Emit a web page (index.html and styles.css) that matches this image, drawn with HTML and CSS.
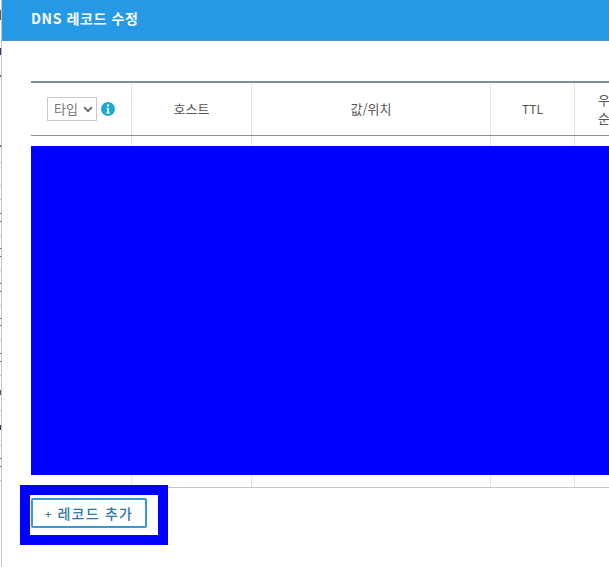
FILE: index.html
```html
<!DOCTYPE html>
<html lang="ko">
<head>
<meta charset="utf-8">
<title>DNS 레코드 수정</title>
<link rel="stylesheet" href="styles.css">
</head>
<body>
<svg class="edge-ticks" width="1" height="567" viewBox="0 0 1 567" aria-hidden="true">
  <path fill="#55606a" d="M0 10h1v10H0zM0 75h1v2H0zM0 145h1v2H0zM0 213h1v1H0zM0 221h1v1H0zM0 248h1v1H0zM0 256h1v1H0zM0 283h1v1H0zM0 291h1v1H0zM0 318h1v1H0zM0 325h1v1H0zM0 353h1v1H0zM0 361h1v1H0zM0 390h1v5H0zM0 458h1v1H0zM0 466h1v1H0z"/>
  <path fill="#2b2f6b" d="M0 48h1v7H0zM0 425h1v5H0z"/>
  <path fill="#c8c8c8" d="M0 162h1v1H0zM0 185h1v1H0zM0 199h1v1H0zM0 235h1v1H0zM0 270h1v1H0zM0 305h1v1H0zM0 340h1v1H0zM0 375h1v1H0zM0 410h1v1H0zM0 445h1v1H0zM0 480h1v1H0z"/>
</svg>
<div class="modal">
  <header class="modal-head">DNS 레코드 수정</header>
  <div class="modal-body">
    <div class="record-table">
      <div class="head-row">
        <div class="cell cell-type">
          <span class="type-select">타입<svg class="chevron" viewBox="0 0 10 7" width="10" height="7"><path d="M1 1.200 5 5.200 9 1.200" fill="none" stroke="#666" stroke-width="1.800"/></svg></span>
          <svg class="info" viewBox="0 0 14 14" width="14" height="14"><circle cx="7" cy="7" r="7" fill="#1fa9d0"/><rect x="6" y="2.500" width="2" height="2" fill="#fff"/><path d="M5.300 6h2.700v4.400h1v1.100H5.300v-1.100h1V7.100H5.300z" fill="#fff"/></svg>
        </div>
        <div class="cell cell-host">호스트</div>
        <div class="cell cell-value">값/위치</div>
        <div class="cell cell-ttl">TTL</div>
        <div class="cell cell-prio">우<br>순</div>
      </div>
      <div class="body-row">
        <div class="cell cell-type"></div>
        <div class="cell cell-host"></div>
        <div class="cell cell-value"></div>
        <div class="cell cell-ttl"></div>
        <div class="cell cell-prio"></div>
        <div class="redaction"></div>
      </div>
    </div>
    <div class="add-frame">
      <button class="add-btn" type="button"><span class="plus">+</span> 레코드 추가</button>
    </div>
  </div>
</div>
</body>
</html>
```

FILE: styles.css
```css
html, body {
  margin: 0;
  padding: 0;
  height: 567px;
  overflow: hidden;
  background: #fff;
}
body {
  display: flex;
  font-family: "Noto Sans CJK KR", "Liberation Sans", sans-serif;
  color: #555;
}
.edge-ticks {
  flex: none;
  display: block;
}
.modal {
  flex: 1;
  min-width: 0;
  height: 567px;
  border-left: 1px solid #c4c4c4;
  overflow: hidden;
}
.modal-head {
  height: 41px;
  box-sizing: border-box;
  background: #2599e6;
  color: #fff;
  font-size: 14px;
  font-weight: 700;
  letter-spacing: 0.6px;
  line-height: 37px;
  padding-left: 29px;
  border-bottom: 1px solid #3f94cf;
}
.modal-body {
  padding: 40px 0 0 29px;
}
.record-table {
  width: 620px;
  border-top: 2px solid #7f8f99;
  border-bottom: 1px solid #c8c8c8;
}
.head-row, .body-row {
  display: flex;
}
.head-row {
  height: 52px;
  border-bottom: 1px solid #8c8c8c;
}
.body-row {
  position: relative;
  height: 351px;
}
.cell {
  box-sizing: border-box;
  display: flex;
  align-items: center;
  justify-content: center;
  text-align: center;
  border-right: 1px solid #e2e2e2;
  font-size: 13px;
  line-height: 18px;
  flex: none;
}
.cell-type { width: 101px; justify-content: flex-start; padding-left: 16px; gap: 4px; }
.cell-host { width: 120px; }
.cell-value { width: 239px; }
.cell-ttl { width: 84px; font-size: 12px; }
.cell-prio { width: 76px; border-right: 0; justify-content: flex-start; padding-left: 23px; }
.type-select {
  box-sizing: border-box;
  width: 50px;
  height: 24px;
  border: 1px solid #c9c9c9;
  display: flex;
  align-items: center;
  gap: 5px;
  padding-left: 6px;
  color: #777;
  font-size: 13px;
}
.info { flex: none; }
.redaction {
  position: absolute;
  left: 0;
  right: 0;
  top: 10px;
  height: 329px;
  background: #0000ff;
}
.add-frame {
  box-sizing: border-box;
  width: 148px;
  height: 60px;
  margin: -3px 0 0 -11px;
  border: 10px solid #0000ff;
  padding: 3px 0 0 1px;
  position: relative;
  background: #fff;
}
.add-btn {
  display: block;
  box-sizing: border-box;
  width: 116px;
  height: 30px;
  border: 2px solid #3498db;
  border-radius: 2px;
  background: #fff;
  color: #2f78ad;
  font-family: "Noto Sans CJK KR", sans-serif;
  font-size: 14px;
  font-weight: 500;
  letter-spacing: 1.2px;
  padding: 0;
  line-height: 24px;
}
.plus { font-size: 11px; }
```
